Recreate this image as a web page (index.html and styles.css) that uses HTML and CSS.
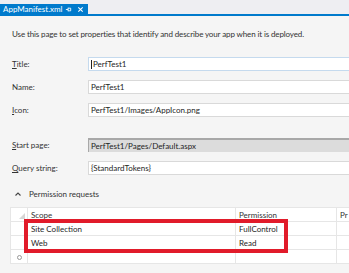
FILE: index.html
```html
<!DOCTYPE html>
<html lang="en">

<head>
    <meta charset="UTF-8">
    <meta name="viewport" content="width=device-width, initial-scale=1.0">
    <title>AppManifest.xml</title>
    <link rel="stylesheet" href="styles.css">
</head>

<body>
    <div class="tabbar">
        <div class="tab">
            <span class="tab-name">AppManifest.xml</span>
            <svg class="tab-pin" viewBox="0 0 8 8">
                <path d="M1 4h2.5M3.5 2v4M3.5 2.5h3v3h-3" fill="none" stroke="#fff" stroke-width="1" />
            </svg>
            <svg class="tab-close" viewBox="0 0 8 8">
                <path d="M1.5 1.5l5 5M6.5 1.5l-5 5" stroke="#fff" stroke-width="1.2" />
            </svg>
        </div>
    </div>

    <div class="editor">
        <p class="intro">Use this page to set properties that identify and describe your app when it is deployed.</p>

        <div class="form">
            <div class="row">
                <label><u>T</u>itle:</label>
                <div class="field focused"><span class="caret"></span>PerfTest1</div>
            </div>
            <div class="row">
                <label>Name:</label>
                <div class="field">PerfTest1</div>
            </div>
            <div class="row">
                <label><u>I</u>con:</label>
                <div class="field">PerfTest1/Images/AppIcon.png</div>
            </div>
            <div class="row row-gap">
                <label><u>S</u>tart page:</label>
                <div class="field disabled">PerfTest1/Pages/Default.aspx</div>
            </div>
            <div class="row">
                <label><u>Q</u>uery string:</label>
                <div class="field">{StandardTokens}</div>
            </div>
        </div>

        <div class="section">
            <svg class="chevron" viewBox="0 0 6 4">
                <path d="M0.5 3.5L3 1l2.5 2.5" fill="none" stroke="#444" stroke-width="1.1" />
            </svg>
            <span>Permission requests</span>
        </div>

        <div class="grid-wrap">
            <table class="grid">
                <colgroup>
                    <col class="c-head">
                    <col class="c-scope">
                    <col class="c-perm">
                    <col>
                </colgroup>
                <tr class="hdr">
                    <td class="rh"><span class="tri"></span></td>
                    <td>Scope</td>
                    <td>Permission</td>
                    <td>Pr</td>
                </tr>
                <tr>
                    <td class="rh"></td>
                    <td>Site Collection</td>
                    <td>FullControl</td>
                    <td></td>
                </tr>
                <tr>
                    <td class="rh"></td>
                    <td>Web</td>
                    <td>Read</td>
                    <td></td>
                </tr>
                <tr>
                    <td class="rh"><span class="newrow"></span></td>
                    <td></td>
                    <td></td>
                    <td></td>
                </tr>
            </table>
            <div class="highlight"></div>
        </div>
    </div>
</body>

</html>
```

FILE: styles.css
```css
body {
    margin: 0;
    width: 349px;
    height: 273px;
    overflow: hidden;
    background-color: #f5f5f5;
    font-family: Lato, "Open Sans", sans-serif;
    font-size: 8px;
    color: #1e1e1e;
}

/* Tab strip */
.tabbar {
    height: 16px;
    box-sizing: border-box;
    background-color: #eeeef2;
    border-bottom: 2px solid #007acc;
    display: flex;
    align-items: flex-end;
}

.tab {
    height: 10px;
    width: 88px;
    box-sizing: border-box;
    background-color: #007acc;
    color: #fff;
    display: flex;
    align-items: center;
    padding-left: 3px;
    line-height: 10px;
}

.tab-name {
    width: 62px;
}

.tab-pin {
    width: 7px;
    height: 7px;
}

.tab-close {
    width: 7px;
    height: 7px;
    margin-left: 5px;
}

/* Editor */
.editor {
    padding: 12px 0 0 12px;
}

.intro {
    margin: 0;
    line-height: 12px;
    height: 12px;
    color: #333;
    letter-spacing: -0.12px;
}

.form {
    margin-top: 17px;
}

.row {
    display: grid;
    grid-template-columns: 76px 1fr;
    align-items: center;
    height: 14px;
    margin-bottom: 9px;
}

.row-gap {
    margin-top: 21px;
}

.row label {
    color: #333;
}

.row u {
    text-decoration-thickness: 1px;
    text-underline-offset: 1px;
}

.field {
    height: 14px;
    box-sizing: border-box;
    background-color: #fff;
    border: 1px solid #d9d9d9;
    border-right: none;
    padding-left: 2px;
    line-height: 12px;
    white-space: nowrap;
    display: flex;
    align-items: center;
}

.field.focused {
    border-color: #c5daee;
}

.caret {
    width: 1px;
    height: 9px;
    background-color: #222;
    margin-right: 1px;
}

.field.disabled {
    background-color: #dcdcdc;
    border-color: #a8a8a8 #dcdcdc #dcdcdc #a8a8a8;
    border-width: 2px 0 0 1px;
}

.section {
    display: flex;
    align-items: center;
    height: 12px;
    margin-top: 13px;
    color: #333;
}

.chevron {
    width: 6px;
    height: 4px;
    margin: 0 8px 0 3px;
}

/* Permission grid */
.grid-wrap {
    position: relative;
    margin: 7px 0 0 -2px;
}

.grid {
    border-collapse: collapse;
    table-layout: fixed;
    width: 339px;
    background-color: #fff;
    border: 1px solid #c8c8c8;
    border-right: none;
}

.c-head {
    width: 17px;
}

.c-scope {
    width: 208px;
}

.c-perm {
    width: 101px;
}

.grid td {
    height: 13px;
    padding: 0 0 0 3px;
    border: 1px solid #e6e6e6;
    line-height: 12px;
    white-space: nowrap;
    overflow: hidden;
}

.grid td:last-child {
    border-right: none;
}

.grid .hdr td {
    color: #333;
}

.grid .rh {
    padding: 0;
    position: relative;
}

.tri {
    position: absolute;
    right: 2px;
    bottom: 2px;
    width: 0;
    height: 0;
    border-left: 6px solid transparent;
    border-bottom: 6px solid #d6d6d6;
}

.newrow {
    position: absolute;
    left: 6px;
    top: 5px;
    width: 3px;
    height: 3px;
    border: 1px solid #999;
    border-radius: 50%;
}

.highlight {
    position: absolute;
    left: 14px;
    top: 12px;
    width: 264px;
    height: 34px;
    box-sizing: border-box;
    border: 4px solid #e11b2a;
}
```
